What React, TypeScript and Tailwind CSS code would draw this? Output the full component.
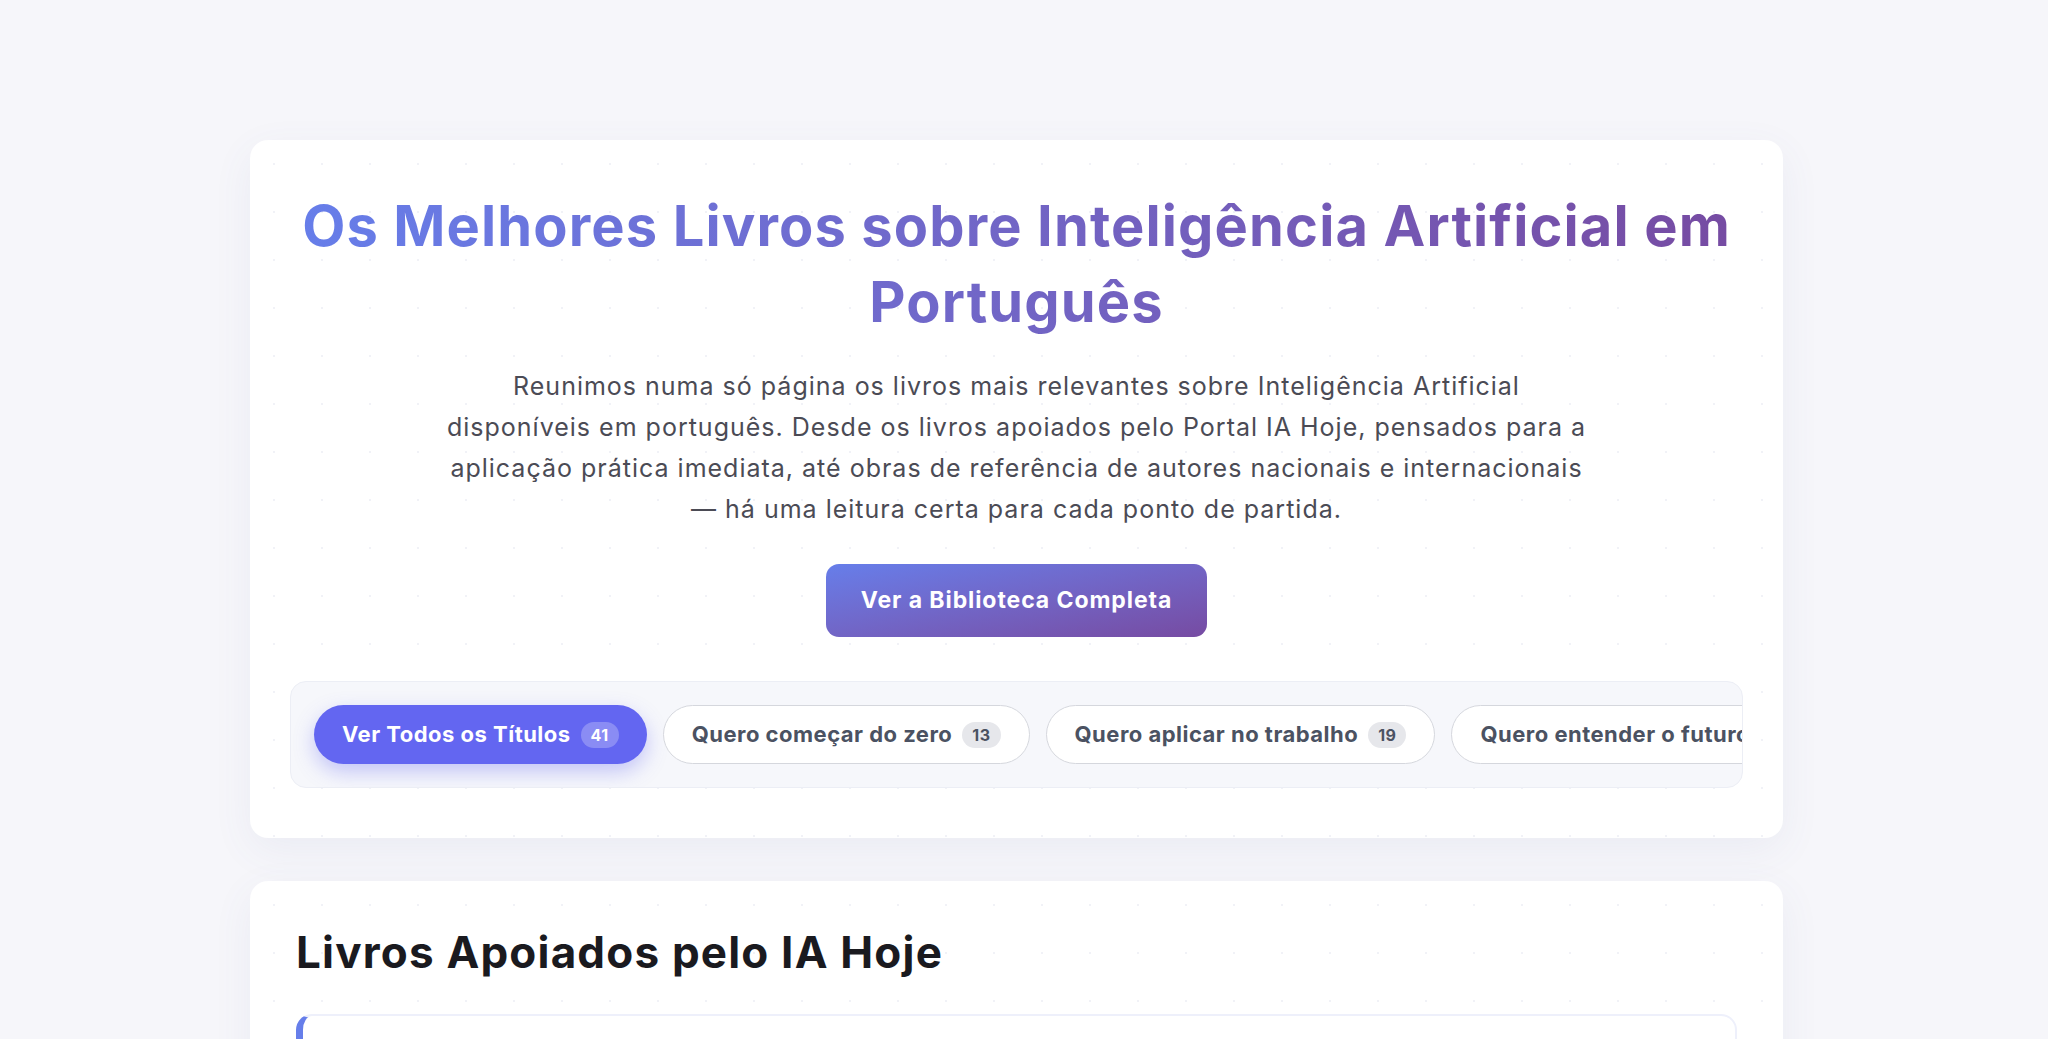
import React from 'react';

interface Filter {
  label: string;
  count: number;
  active?: boolean;
}

const filters: Filter[] = [
  { label: 'Ver Todos os Títulos', count: 41, active: true },
  { label: 'Quero começar do zero', count: 13 },
  { label: 'Quero aplicar no trabalho', count: 19 },
  { label: 'Quero entender o futuro', count: 9 },
  { label: 'Quero aprofundar', count: 7 },
];

function FilterPill({ label, count, active }: Filter) {
  if (active) {
    return (
      <button className="flex h-[59px] shrink-0 items-center gap-[10px] rounded-full bg-[#6366f1] px-7 text-[22px] font-bold tracking-[0.022em] text-white shadow-[0_8px_20px_rgba(99,102,241,0.35)]">
        {label}
        <span className="flex h-[26px] items-center rounded-full bg-white/25 px-[10px] text-[16px] font-bold">{count}</span>
      </button>
    );
  }
  return (
    <button className="flex h-[59px] shrink-0 items-center gap-[10px] rounded-full border border-[#d5d7dd] bg-white px-7 text-[22px] font-bold tracking-[0.022em] text-[#4b5262]">
      {label}
      <span className="flex h-[26px] items-center rounded-full bg-[#e6e7eb] px-[10px] text-[16px] font-bold">{count}</span>
    </button>
  );
}

export default function App() {
  return (
    <div className="min-h-screen bg-[#f6f6fa] pr-[15px] pt-[140px] font-['Inter',sans-serif]">
      <div className="mx-auto flex w-[1533px] flex-col gap-[43px]">
        {/* Hero */}
        <section className="rounded-[18px] bg-white bg-[radial-gradient(#f1f2f7_1.3px,transparent_1.3px)] bg-[length:48px_48px] px-10 pb-[50px] pt-12 shadow-[0_12px_40px_rgba(90,95,150,0.07)]">
          <h1 className="bg-linear-to-r from-[#667eea] to-[#764ba2] bg-clip-text text-center text-[56px] font-bold leading-[76px] tracking-[0.02em] text-transparent">
            Os Melhores Livros sobre Inteligência Artificial em
            <br />
            Português
          </h1>
          <p className="mt-[26px] text-center text-[25px] leading-[41px] tracking-[0.04em] text-[#4b4b55]">
            Reunimos numa só página os livros mais relevantes sobre Inteligência Artificial
            <br />
            disponíveis em português. Desde os livros apoiados pelo Portal IA Hoje, pensados para a
            <br />
            aplicação prática imediata, até obras de referência de autores nacionais e internacionais
            <br />— há uma leitura certa para cada ponto de partida.
          </p>
          <div className="mt-[34px] flex justify-center">
            <button className="h-[73px] rounded-[13px] bg-linear-to-br from-[#667eea] to-[#764ba2] px-[35px] text-[23px] font-bold tracking-[0.04em] text-white">
              Ver a Biblioteca Completa
            </button>
          </div>
          <div className="mt-11 flex gap-4 overflow-hidden rounded-2xl border border-[#eceef5] bg-[#f6f7fb] p-[23px]">
            {filters.map((f) => (
              <FilterPill key={f.label} {...f} />
            ))}
          </div>
        </section>

        {/* Livros apoiados */}
        <section className="rounded-[18px] bg-white bg-[radial-gradient(#f1f2f7_1.3px,transparent_1.3px)] bg-[length:48px_48px] px-[46px] pb-10 pt-[45px] shadow-[0_12px_40px_rgba(90,95,150,0.07)]">
          <h2 className="text-[44px] font-bold leading-[1.2] tracking-[0.027em] text-[#1a1a1f]">Livros Apoiados pelo IA Hoje</h2>
          <div className="mt-[35px] h-[240px] rounded-2xl border-2 border-l-[7px] border-[#eef0fb] border-l-[#667eea] bg-white"></div>
        </section>
      </div>
    </div>
  );
}
